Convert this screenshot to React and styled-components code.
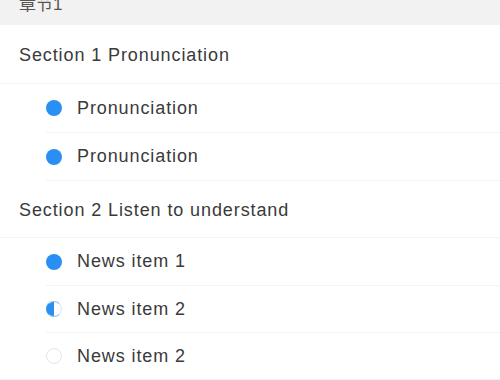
import React from "react";
import styled, { createGlobalStyle } from "styled-components";

const Global = createGlobalStyle`
  html, body {
    margin: 0;
    padding: 0;
    background: #ffffff;
    font-family: "Liberation Sans", Arial, "Noto Sans CJK SC", sans-serif;
    overflow: hidden;
  }
`;

const Page = styled.div`
  width: 500px;
  height: 380px;
  overflow: hidden;
  background: #f2f2f2;
`;

/* the list is scrolled a little: the chapter header is cut at the top */
const Scroller = styled.div`
  margin-top: -20px;
`;

const ChapterHeader = styled.div`
  height: 45px;
  display: flex;
  align-items: center;
  padding-left: 19px;
  background: #f2f2f2;
  color: #555;
  font-size: 17px;
`;

const List = styled.div`
  background: #fff;
`;

const SectionRow = styled.div`
  height: ${p => p.h}px;
  display: flex;
  align-items: center;
  padding: 2px 0 0 19px;
  font-size: 18px;
  letter-spacing: 0.9px;
  color: #3a3a3a;
  border-bottom: 1px solid #f3f3f3;
  box-sizing: border-box;
`;

const ItemRow = styled.div`
  height: ${p => p.h}px;
  display: flex;
  align-items: center;
  margin-left: 46px;
  font-size: 18px;
  letter-spacing: 0.9px;
  color: #3a3a3a;
  border-bottom: ${p => (p.last ? "none" : "1px solid #f3f3f3")};
  box-sizing: border-box;
  gap: 15px;
`;

const Dot = styled.span`
  width: 16px;
  height: 16px;
  border-radius: 50%;
  box-sizing: border-box;
  flex: none;
  ${p =>
    p.state === "full"
      ? "background: #2a8ff3;"
      : p.state === "half"
      ? "background: linear-gradient(90deg, #2a8ff3 50%, #fff 50%); border: 1.5px solid #2a8ff3; border-right-color: #dbe6f3; border-top-color: #8fbff2; border-bottom-color: #8fbff2;"
      : "border: 1.5px solid #e0e6ee; background: #fff;"}
`;

const sections = [
  {
    title: "Section 1 Pronunciation",
    h: 59,
    items: [
      { name: "Pronunciation", state: "full", h: 49 },
      { name: "Pronunciation", state: "full", h: 48 },
    ],
  },
  {
    title: "Section 2 Listen to understand",
    h: 57,
    items: [
      { name: "News item 1", state: "full", h: 48 },
      { name: "News item 2", state: "half", h: 47 },
      { name: "News item 2", state: "empty", h: 46 },
    ],
  },
];

export default function App() {
  return (
    <Page>
      <Global />
      <Scroller>
        <ChapterHeader>章节1</ChapterHeader>
        <List>
          {sections.map((s, si) => (
            <React.Fragment key={si}>
              <SectionRow h={s.h}>{s.title}</SectionRow>
              {s.items.map((it, i) => (
                <ItemRow
                  key={i}
                  h={it.h}
                  last={si === sections.length - 1 && i === s.items.length - 1}
                >
                  <Dot state={it.state} />
                  {it.name}
                </ItemRow>
              ))}
            </React.Fragment>
          ))}
        </List>
      </Scroller>
    </Page>
  );
}
